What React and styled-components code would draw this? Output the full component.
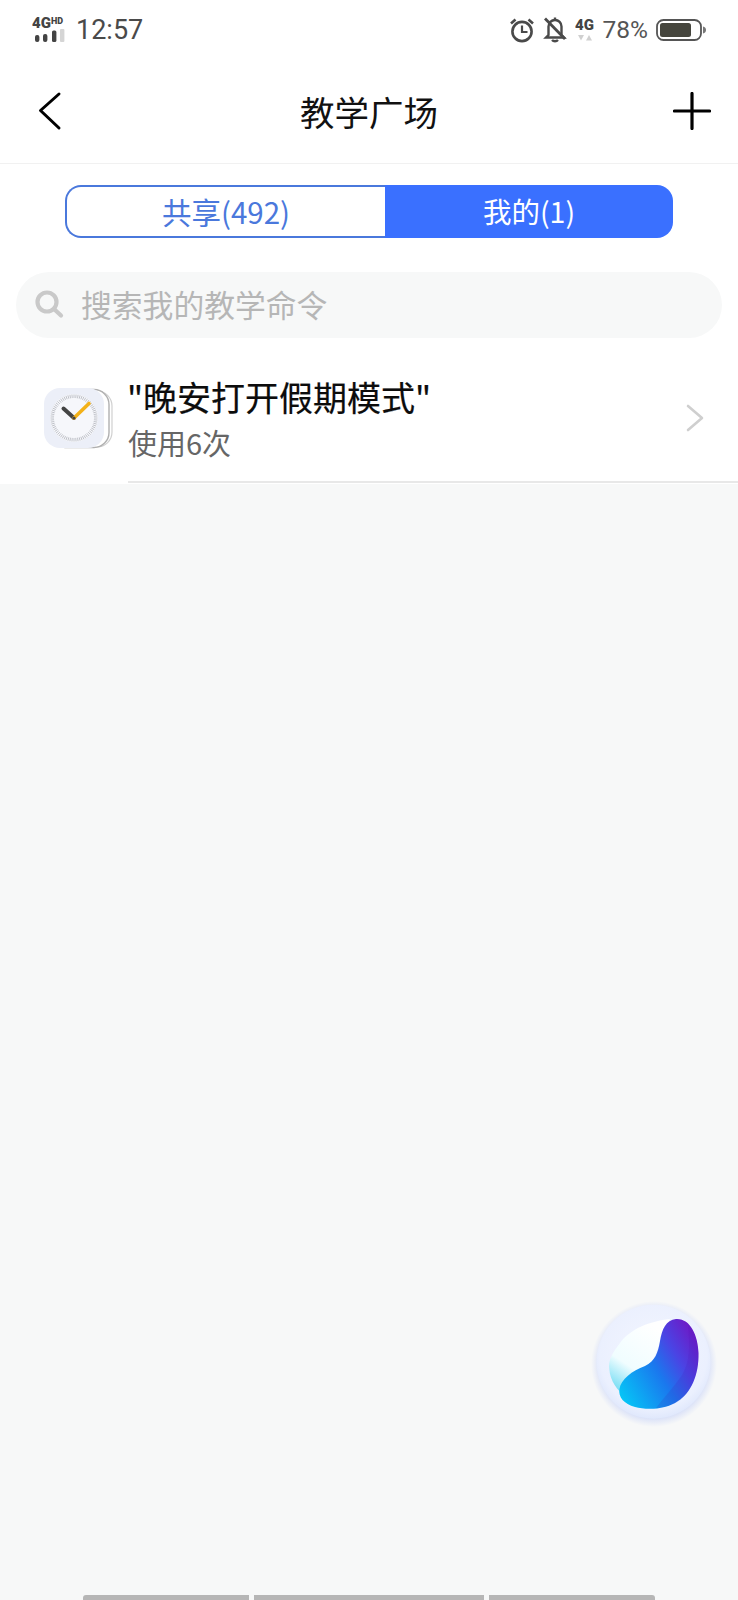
import React from "react";
import styled, { createGlobalStyle } from "styled-components";

const Global = createGlobalStyle`
  html, body { margin: 0; padding: 0; background: #f7f8f8; }
  * { box-sizing: border-box; }
`;
const CJK = `"Noto Sans CJK SC", "Noto Sans", sans-serif`;
const Phone = styled.div`
  position: relative; width: 738px; height: 1600px; overflow: hidden;
  background: #f7f8f8; display: flex; flex-direction: column;
  font-family: "Liberation Sans", ${CJK};
`;
const Top = styled.div`background: #fff; display: flex; flex-direction: column;`;
const StatusBar = styled.div`
  height: 60px; display: flex; align-items: center; justify-content: space-between;
  padding: 0 32px 1px 32px; color: #4a4a4a;
`;
const StatusGroup = styled.div`display: flex; align-items: center; gap: ${p => p.$gap || 0}px;`;
const Clock = styled.span`font-size: 27px; margin-left: 8px; line-height: 30px; font-family: Roboto, sans-serif;`;
const Pct = styled.span`font-size: 24.5px; line-height: 30px; font-family: Roboto, sans-serif; color: #555;`;
const NavBar = styled.div`
  height: 104px; display: flex; align-items: center; justify-content: space-between;
  padding: 0 27px 2px 38px; border-bottom: 1px solid #f1f1f1;
`;
const Title = styled.h1`
  margin: 0; font: 400 34.5px/44px ${CJK}; color: #111;
  position: absolute; left: 0; right: 0; text-align: center; pointer-events: none;
`;
const SegmentWrap = styled.div`padding: 21px 65px 0 65px; display: flex;`;
const Tab = styled.div`
  height: 53px; display: flex; align-items: center; justify-content: center;
  font: 400 ${p => p.$active ? 28.5 : 29.5}px/1 ${CJK};
  ${p => p.$active
    ? `flex: 1; background: #3a70ff; color: #fff; border-radius: 0 16px 16px 0;`
    : `width: 320px; background: #fff; color: #4a78dc; border: 2px solid #4a78dc; border-right: none; border-radius: 16px 0 0 16px;`}
`;
const Search = styled.div`
  margin: 34px 16px 0; height: 66px; border-radius: 33px; background: #f7f8f8;
  display: flex; align-items: center; padding: 0 0 2px 18px; gap: 17px;
  color: #b6b6b6; font: 400 30.8px/1 ${CJK};
`;
const Row = styled.div`
  height: 146px; padding: 0 0 0 44px; display: flex; align-items: flex-start;
`;
const IconCell = styled.div`padding-top: 50px; width: 84px; flex: none;`;
const RowBody = styled.div`
  flex: 1; height: 145px; padding: 38px 34px 0 0; border-bottom: 2px solid #e8e8e8;
  display: flex; justify-content: space-between; align-items: flex-start;
`;
const RowText = styled.div`display: flex; flex-direction: column;`;
const RowTitle = styled.div`font: 400 34px/42px ${CJK}; color: #0c0c0c; -webkit-text-stroke: .2px #0c0c0c; margin-left: -1px;`;
const RowSub = styled.div`font: 400 29px/38px ${CJK}; color: #666; margin-top: 5px;`;
const Chevron = styled.div`padding-top: 28px; display: flex;`;
const Fab = styled.div`position: absolute; left: 590px; top: 1297px; width: 130px; height: 130px;`;
const HomeBar = styled.div`
  margin-top: auto; height: 5px; display: flex; gap: 5px; padding: 0 83px;
`;
const HomeSeg = styled.div`
  width: ${p => p.$w}px; background: #b6b6b6;
  border-radius: ${p => p.$r || "0"};
`;

const Signal = () => (
  <svg width="36" height="36" viewBox="0 -4 36 36">
    <text x="0" y="12" fontFamily="Roboto, sans-serif" fontWeight="900" fontSize="15" fill="#444">4G</text>
    <text x="19" y="8" fontFamily="Roboto, sans-serif" fontWeight="900" fontSize="9" fill="#444">HD</text>
    <rect x="3" y="19" width="4.4" height="7" rx="2" fill="#444" />
    <rect x="11" y="18" width="4.4" height="8" rx="2" fill="#444" />
    <rect x="20" y="14.5" width="4.4" height="11.5" rx="1.5" fill="#444" />
    <rect x="28" y="13" width="4.4" height="13" rx="1" fill="#d5d5d5" />
  </svg>
);
const Alarm = () => (
  <svg width="26" height="26" viewBox="0 0 26 26" fill="none" stroke="#4a4a4a">
    <circle cx="13" cy="14.5" r="9.6" strokeWidth="2.6" />
    <path d="M13 8.5v6.5h5.5" strokeWidth="2.2" />
    <path d="M2 6.5 6.5 2.5M24 6.5 19.5 2.5" strokeWidth="2.6" />
  </svg>
);
const BellOff = () => (
  <svg width="24" height="27" viewBox="0 0 24 27" fill="none" stroke="#4a4a4a" strokeWidth="2.4">
    <path d="M5.5 19V10.5C5.5 7 8.3 4 12 4s6.5 3 6.5 6.5V19l2.5 2.5H3Z" />
    <path d="M9 24c1.5 1.6 4.5 1.6 6 0" />
    <path d="M12 1.5V4" />
    <path d="M2 2.5 22 23" strokeWidth="2.8" />
  </svg>
);
const Net = () => (
  <svg width="20" height="34" viewBox="0 -4 20 34">
    <text x="0" y="13" fontFamily="Roboto, sans-serif" fontWeight="900" fontSize="15" fill="#444">4G</text>
    <path d="M3 18h6l-3 5.5Z" fill="#d0d0d0" />
    <path d="M11 23.5h6l-3-5.5Z" fill="#d0d0d0" />
  </svg>
);
const Battery = () => (
  <svg width="50" height="24" viewBox="0 0 50 24" fill="none">
    <rect x="1" y="2" width="44" height="20" rx="6.5" stroke="#555" strokeWidth="1.8" />
    <rect x="4" y="5" width="31" height="14" rx="2.5" fill="#45453d" />
    <path d="M47 8.5c2 .4 3 1.8 3 3.5s-1 3.1-3 3.5Z" fill="#777" />
  </svg>
);
const Back = () => (
  <svg width="24" height="40" viewBox="0 0 24 40" fill="none" stroke="#000" strokeWidth="3" strokeLinecap="round" strokeLinejoin="round">
    <path d="M21 3 2.5 19.5 21 37" />
  </svg>
);
const Plus = () => (
  <svg width="38" height="38" viewBox="0 0 38 38" stroke="#000" strokeWidth="3.2" strokeLinecap="round">
    <path d="M19 1.5v35M1.5 19h35" />
  </svg>
);
const Magnifier = () => (
  <svg width="30" height="30" viewBox="0 0 30 30" fill="none" stroke="#c9c9c9">
    <circle cx="13" cy="13" r="9.5" strokeWidth="4.2" />
    <path d="M20 20l7 6.5" strokeWidth="4.2" strokeLinecap="round" />
  </svg>
);
const ClockApp = () => {
  const ticks = Array.from({ length: 72 }, (_, i) => i * 5);
  return (
    <svg width="70" height="62" viewBox="0 0 70 62" fill="none">
      <rect x="10" y="3" width="58" height="56" rx="15" fill="#fff" stroke="#d0d0d0" strokeWidth="1.2" />
      <rect x="6" y="1.5" width="59" height="58" rx="15" fill="#fff" stroke="#b0b0b0" strokeWidth="1.4" />
      <rect x="0" y="0" width="60" height="60" rx="16" fill="#eceff8" />
      <circle cx="30" cy="30" r="24" fill="#f6f7fb" />
      {ticks.map(a => (
        <line key={a} x1="30" y1="6.5" x2="30" y2="10" stroke="#b8bac1" strokeWidth="0.8" transform={`rotate(${a} 30 30)`} />
      ))}
      <path d="M30 30 19.5 20.5" stroke="#444" strokeWidth="4" strokeLinecap="round" />
      <path d="M30 30 45 15.5" stroke="#f3b118" strokeWidth="3.6" strokeLinecap="round" />
      <circle cx="30" cy="30" r="1.6" fill="#444" />
    </svg>
  );
};
const RowChevron = () => (
  <svg width="18" height="28" viewBox="0 0 18 28" fill="none" stroke="#cfcfcf" strokeWidth="2.6" strokeLinecap="round" strokeLinejoin="round">
    <path d="M2 2l14 12L2 26" />
  </svg>
);
const Assistant = () => (
  <svg width="130" height="130" viewBox="0 0 130 130">
    <defs>
      <radialGradient id="disc" cx="50%" cy="45%" r="55%">
        <stop offset="0%" stopColor="#f3f6ff" />
        <stop offset="85%" stopColor="#ebf0fe" />
        <stop offset="100%" stopColor="#e0e8fc" />
      </radialGradient>
      <radialGradient id="halo" cx="50%" cy="50%" r="50%">
        <stop offset="84%" stopColor="#7d97f5" stopOpacity=".28" />
        <stop offset="100%" stopColor="#8aa2f7" stopOpacity="0" />
      </radialGradient>
      <linearGradient id="glass" gradientUnits="userSpaceOnUse" x1="65" y1="30" x2="22" y2="95">
        <stop offset="0%" stopColor="#ffffff" />
        <stop offset="60%" stopColor="#f0fdff" />
        <stop offset="100%" stopColor="#62d8f2" />
      </linearGradient>
      <linearGradient id="blob" gradientUnits="userSpaceOnUse" x1="30" y1="98" x2="110" y2="50">
        <stop offset="0%" stopColor="#06c4f6" />
        <stop offset="48%" stopColor="#1a78ee" />
        <stop offset="74%" stopColor="#4a44e4" />
        <stop offset="100%" stopColor="#6a1ec9" />
      </linearGradient>
    </defs>
    <circle cx="64" cy="67" r="63" fill="url(#halo)" />
    <circle cx="63.5" cy="64.7" r="57" fill="url(#disc)" />
    <path d="M80 22C60 24 40 32 30 46 22 56 18 64 19.3 72 20 84 28 94 34 98L60 70Z" fill="url(#glass)" />
    <path d="M86 22C100 21 108 38 108.5 56 109 78 101 96 88 104 76 113 56 113 45 110 34 107 28 100 29.5 92 31 82 42 74 55 69 65 64 68 56 70 44 72 32 76 23 86 22Z" fill="url(#blob)" />
    <path d="M66 111C80 110 90 105 96 97 104 87 109 72 108.5 56 108 44 104 33 98 27 100 50 100 65 92 78 84 90 74 100 66 111Z" fill="#4a12b0" opacity=".14" />
  </svg>
);

export default function App() {
  return (
    <Phone>
      <Global />
      <Top>
        <StatusBar>
          <StatusGroup>
            <Signal />
            <Clock>12:57</Clock>
          </StatusGroup>
          <StatusGroup $gap={8}>
            <Alarm />
            <BellOff />
            <Net />
            <Pct>78%</Pct>
            <Battery />
          </StatusGroup>
        </StatusBar>
        <NavBar>
          <Back />
          <Title>教学广场</Title>
          <Plus />
        </NavBar>
        <SegmentWrap>
          <Tab>共享(492)</Tab>
          <Tab $active>我的(1)</Tab>
        </SegmentWrap>
        <Search>
          <Magnifier />
          <span>搜索我的教学命令</span>
        </Search>
        <Row>
          <IconCell><ClockApp /></IconCell>
          <RowBody>
            <RowText>
              <RowTitle>"晚安打开假期模式"</RowTitle>
              <RowSub>使用6次</RowSub>
            </RowText>
            <Chevron><RowChevron /></Chevron>
          </RowBody>
        </Row>
      </Top>
      <Fab><Assistant /></Fab>
      <HomeBar>
        <HomeSeg $w={166} $r="3px 0 0 0" />
        <HomeSeg $w={230} />
        <HomeSeg $w={166} $r="0 3px 0 0" />
      </HomeBar>
    </Phone>
  );
}
